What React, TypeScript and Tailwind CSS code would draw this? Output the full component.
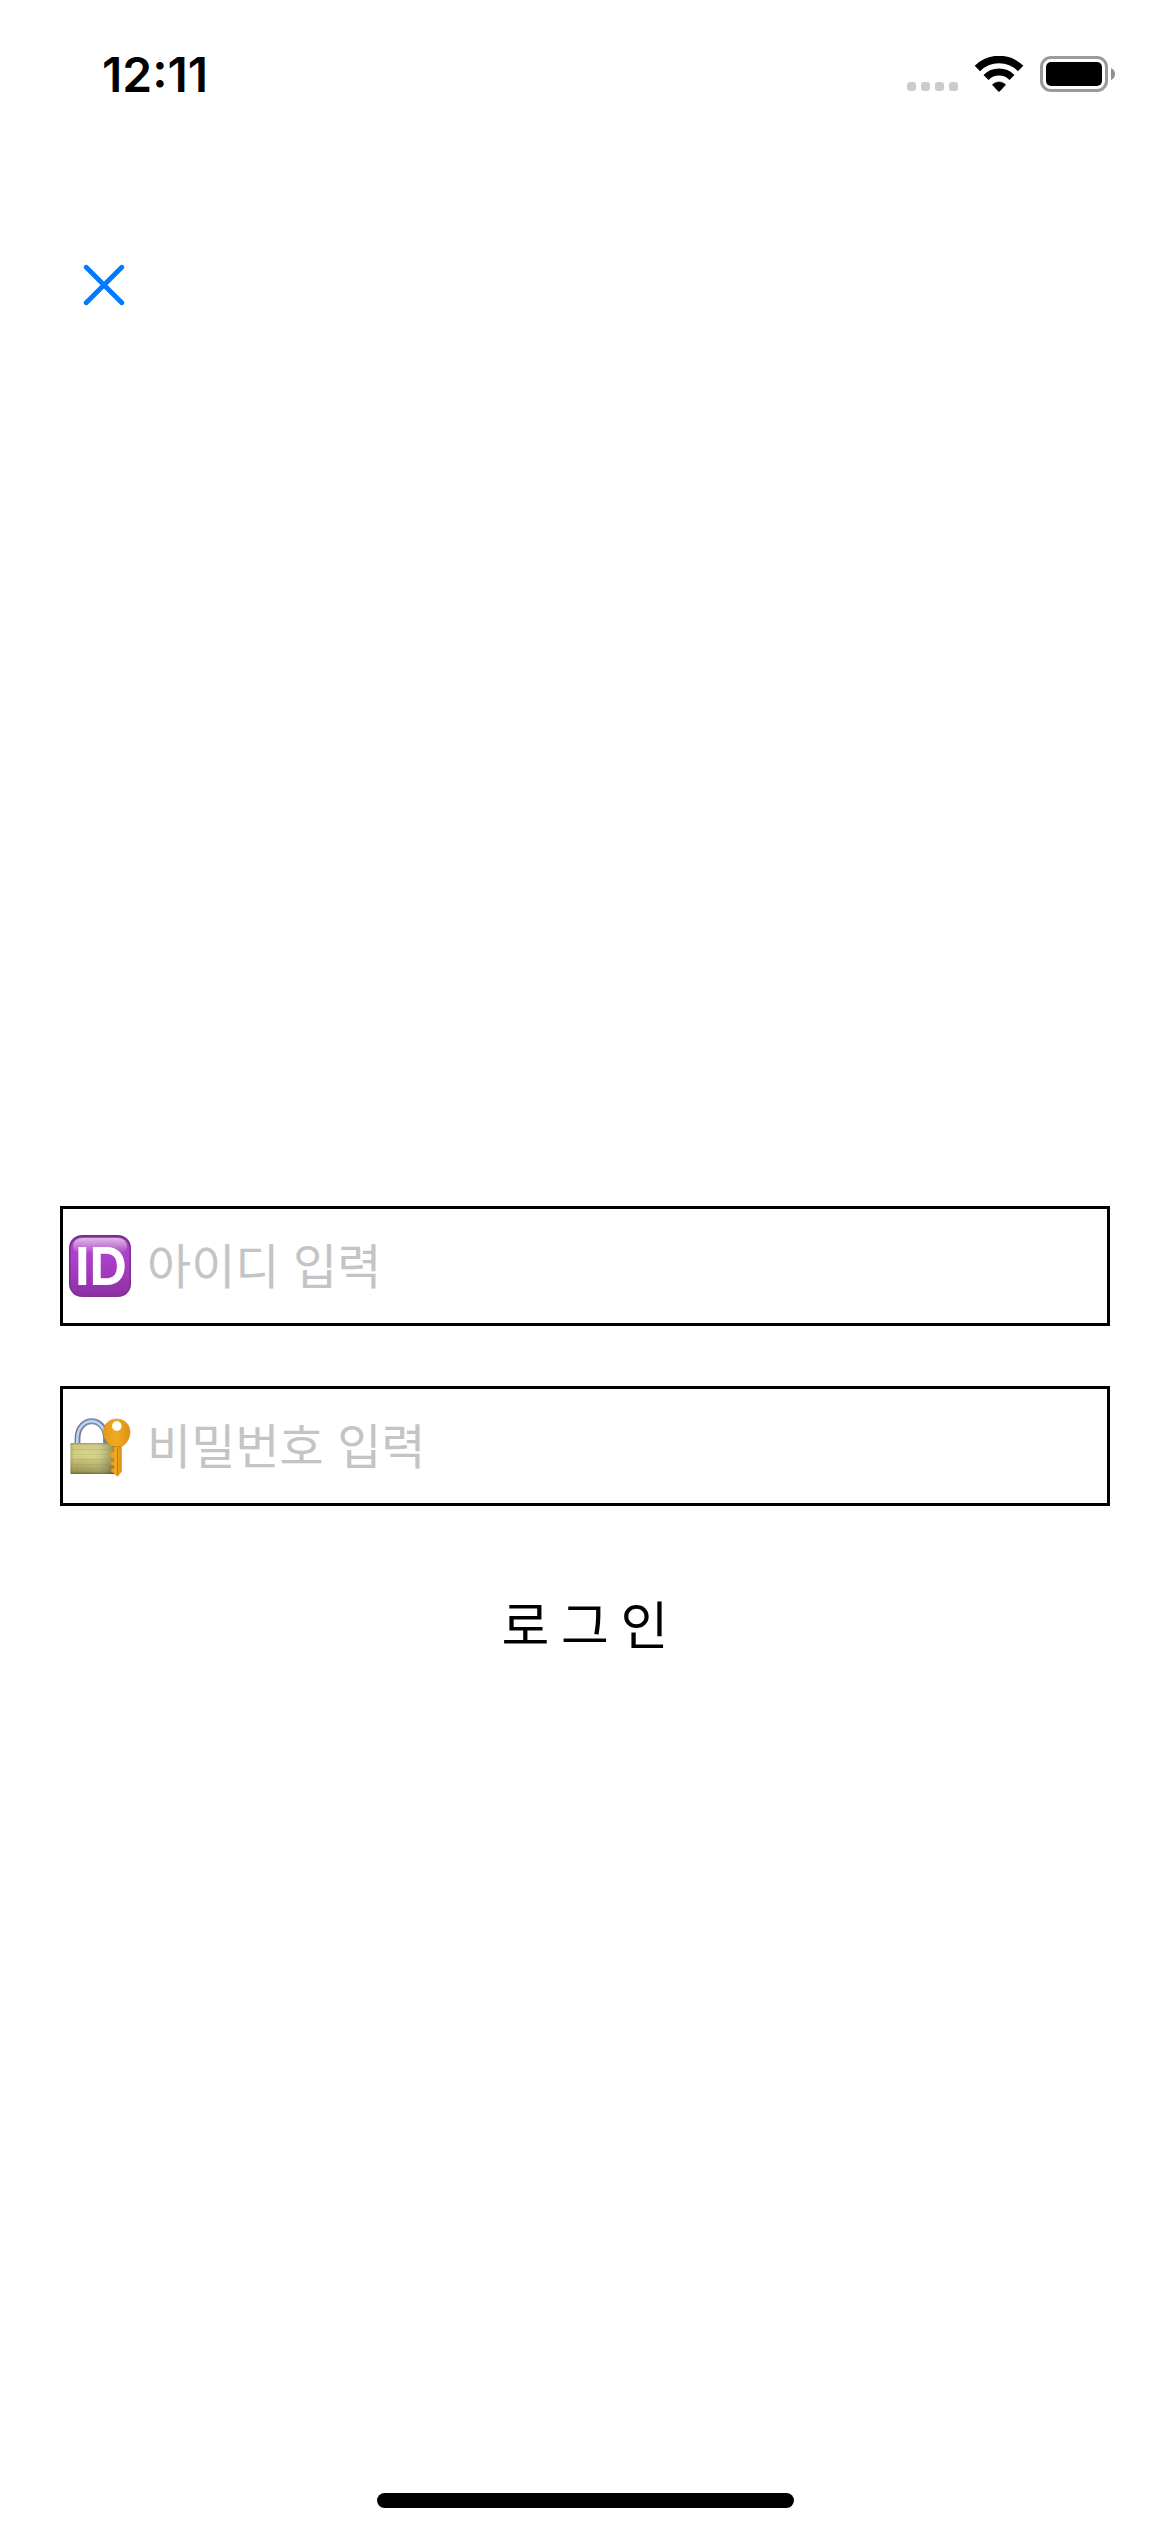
import type { ReactNode } from "react";

function SignalDots() {
  return (
    <svg width="51" height="10" viewBox="0 0 51 10" fill="#cbcbcb" aria-hidden="true">
      {[0, 14, 28, 42].map((x) => (
        <rect key={x} x={x} y="0" width="9" height="9" rx="3" />
      ))}
    </svg>
  );
}

function WifiIcon() {
  return (
    <svg width="50" height="36" viewBox="0 0 50 36" fill="none" aria-hidden="true">
      <path d="M3.4 12.5 A30.5 30.5 0 0 1 46.6 12.5" stroke="#000" strokeWidth="7.6" />
      <path d="M12 21.4 A18.4 18.4 0 0 1 38 21.4" stroke="#000" strokeWidth="7" />
      <path
        d="M18.4 28.8 C22.1 25 27.9 25 31.6 28.8 L25.6 35.2 Q25 35.8 24.4 35.2 Z"
        fill="#000"
        stroke="#000"
        strokeWidth="0.6"
        strokeLinejoin="round"
      />
    </svg>
  );
}

function BatteryIcon() {
  return (
    <svg width="76" height="36" viewBox="0 0 76 36" aria-hidden="true">
      <rect x="1.5" y="1.5" width="65" height="33" rx="9.5" fill="none" stroke="#9a9a9a" strokeWidth="3" />
      <rect x="6" y="6" width="56" height="24" rx="5" fill="#000" />
      <path d="M71 12 Q75 14 75 18 Q75 22 71 24 Z" fill="#8f8f8f" />
    </svg>
  );
}

function CloseIcon() {
  return (
    <svg width="42" height="42" viewBox="0 0 42 42" aria-hidden="true">
      <path d="M3.2 3.2 L38.8 38.8 M38.8 3.2 L3.2 38.8" stroke="#007aff" strokeWidth="4.8" strokeLinecap="round" />
    </svg>
  );
}

function IdIcon() {
  return (
    <svg width="62" height="62" viewBox="0 0 62 62" aria-hidden="true">
      <defs>
        <linearGradient id="idBody" x1="0" y1="0" x2="0" y2="1">
          <stop offset="0" stopColor="#a847c0" />
          <stop offset="0.35" stopColor="#ae3fcb" />
          <stop offset="0.65" stopColor="#9f39b9" />
          <stop offset="1" stopColor="#8b30a3" />
        </linearGradient>
        <linearGradient id="idEdge" x1="0" y1="0" x2="0" y2="1">
          <stop offset="0" stopColor="#7c2c91" />
          <stop offset="1" stopColor="#7f3094" />
        </linearGradient>
        <linearGradient id="idGloss" x1="0" y1="0" x2="0" y2="1">
          <stop offset="0" stopColor="#fff" stopOpacity="0.62" />
          <stop offset="1" stopColor="#fff" stopOpacity="0" />
        </linearGradient>
      </defs>
      <rect width="62" height="62" rx="13" fill="url(#idEdge)" />
      <rect x="1.5" y="2" width="59" height="58.5" rx="12" fill="url(#idBody)" />
      <rect x="4" y="3" width="54" height="16" rx="9" fill="url(#idGloss)" />
      <text
        x="32"
        y="50"
        textAnchor="middle"
        fill="#fff"
        fontSize="52"
        fontWeight="700"
        fontFamily="Inter, 'Liberation Sans', sans-serif"
      >
        ID
      </text>
    </svg>
  );
}

function LockKeyIcon() {
  return (
    <svg width="62" height="62" viewBox="0 0 62 62" aria-hidden="true">
      <defs>
        <linearGradient id="lockBody" x1="0" y1="0" x2="0" y2="1">
          <stop offset="0" stopColor="#99914f" />
          <stop offset="0.08" stopColor="#c9c579" />
          <stop offset="0.4" stopColor="#d5d07c" />
          <stop offset="0.75" stopColor="#aaa55a" />
          <stop offset="0.93" stopColor="#918a43" />
          <stop offset="1" stopColor="#5c5628" />
        </linearGradient>
        <linearGradient id="lockShade" x1="0" y1="0" x2="1" y2="0">
          <stop offset="0" stopColor="#6b6530" stopOpacity="0.35" />
          <stop offset="0.12" stopColor="#fff" stopOpacity="0.05" />
          <stop offset="0.5" stopColor="#fff" stopOpacity="0.12" />
          <stop offset="1" stopColor="#4d481f" stopOpacity="0.5" />
        </linearGradient>
        <linearGradient id="shackle" x1="0" y1="0" x2="1" y2="0">
          <stop offset="0" stopColor="#737a86" />
          <stop offset="0.5" stopColor="#7390bd" />
          <stop offset="1" stopColor="#717d90" />
        </linearGradient>
        <linearGradient id="keyGold" x1="0" y1="0" x2="1" y2="0">
          <stop offset="0" stopColor="#e79b16" />
          <stop offset="0.5" stopColor="#f1a922" />
          <stop offset="1" stopColor="#dd9118" />
        </linearGradient>
      </defs>
      <g transform="translate(0 1.5)">
        <path d="M8.5 28 V22 C9 -1 36.5 -1 37 22 V28" fill="none" stroke="url(#shackle)" strokeWidth="5.8" />
        <path d="M8.3 28 V22 C9 -1 36 -1 36.7 22" fill="none" stroke="#bcd3f2" strokeWidth="2.6" />
        <rect x="1.5" y="26.5" width="44" height="31" rx="1" fill="url(#lockBody)" />
        <rect x="1.5" y="26.5" width="44" height="31" rx="1" fill="url(#lockShade)" />
        <path d="M3 33 H40 M3 38 H40 M3 43 H40 M3 48 H40" stroke="#8a8443" strokeWidth="0.6" opacity="0.35" />
        <path
          d="M45 30 V35 Q41 35 41 38.5 Q41 41.5 45 42 V44.5 Q41.5 45 41.5 47 Q42 49 45 49 V51.5 Q41.5 52 42 54.5 Q43 56 45 56 V57 L48.5 60 L52.5 55 V30 Z"
          fill="url(#keyGold)"
          stroke="#d98f14"
          strokeWidth="0.6"
        />
        <path
          d="M47.5 2.5 C55.5 2.5 61 8 61 15.5 C61 23 56 28.5 52.5 30 H43 C39 28 34.5 22 34.5 15.5 C34.5 8 40 2.5 47.5 2.5 Z"
          fill="url(#keyGold)"
          stroke="#d98f14"
          strokeWidth="0.6"
        />
        <circle cx="47.8" cy="9.6" r="4.8" fill="#fff" />
        <path d="M48.5 31 V58" stroke="#c27b0e" strokeWidth="1" />
        <path d="M43.5 30 H52" stroke="#c98511" strokeWidth="1" />
      </g>
    </svg>
  );
}

type FieldProps = {
  id: string;
  type: string;
  label: string;
  icon: ReactNode;
};

function Field({ id, type, label, icon }: FieldProps) {
  return (
    <div className="flex h-[120px] items-center border-3 border-black pl-1.5">
      <label htmlFor={id} aria-label={label} className="shrink-0">
        {icon}
      </label>
      <input
        id={id}
        type={type}
        placeholder={label}
        className="ml-4 h-full min-w-0 flex-1 bg-transparent text-5xl text-black outline-none placeholder:text-[#c4c4c6]"
      />
    </div>
  );
}

export default function App() {
  return (
    <div className="flex min-h-screen flex-col bg-white font-['Inter','Noto_Sans_CJK_KR',sans-serif] text-black">
      <header className="flex items-end justify-between pt-12 pr-[54px] pl-[102px]">
        <time className="text-5xl leading-[54px] font-semibold">12:11</time>
        <div className="flex items-end gap-4 pb-2.5">
          <SignalDots />
          <WifiIcon />
          <BatteryIcon />
        </div>
      </header>

      <main className="flex flex-1 flex-col px-[60px] pt-[139px]">
        <button type="button" aria-label="닫기" className="flex size-[88px] items-center justify-center">
          <CloseIcon />
        </button>

        <form className="mt-[877px] flex flex-col gap-[60px]" onSubmit={(e) => e.preventDefault()}>
          <Field id="user-id" type="text" label="아이디 입력" icon={<IdIcon />} />
          <Field id="password" type="password" label="비밀번호 입력" icon={<LockKeyIcon />} />
          <button type="submit" className="h-[120px] pb-1.5 font-['Noto_Sans_CJK_KR',sans-serif] text-[52px]">
            로 그 인
          </button>
        </form>
      </main>

      <footer className="flex justify-center pb-6">
        <div className="h-[15px] w-[417px] rounded-full bg-black" />
      </footer>
    </div>
  );
}
